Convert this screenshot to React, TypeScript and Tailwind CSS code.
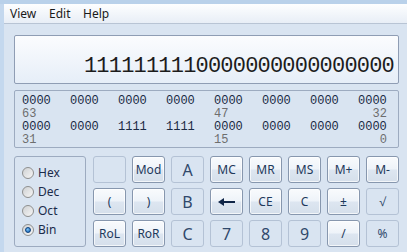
import React from 'react';

type Key = { label: string; on: boolean; big?: boolean };

const rows: Key[][] = [
  [
    { label: '', on: false },
    { label: 'Mod', on: true },
    { label: 'A', on: false, big: true },
    { label: 'MC', on: true },
    { label: 'MR', on: true },
    { label: 'MS', on: true },
    { label: 'M+', on: true },
    { label: 'M-', on: true },
  ],
  [
    { label: '(', on: true },
    { label: ')', on: true },
    { label: 'B', on: false, big: true },
    { label: 'back', on: true },
    { label: 'CE', on: true },
    { label: 'C', on: true },
    { label: '±', on: true },
    { label: '√', on: false },
  ],
  [
    { label: 'RoL', on: true },
    { label: 'RoR', on: true },
    { label: 'C', on: false, big: true },
    { label: '7', on: false, big: true },
    { label: '8', on: false, big: true },
    { label: '9', on: false, big: true },
    { label: '/', on: true },
    { label: '%', on: false },
  ],
];

const BackArrow = () => (
  <svg width="18" height="8" viewBox="0 0 18 8">
    <path d="M0 4 L6 0 L6 8 Z" fill="#0f2547" />
    <rect x="5" y="3" width="12" height="2" fill="#0f2547" />
  </svg>
);

const CalcKey = ({ k }: { k: Key }) => (
  <div
    className={
      'w-[33px] h-[27px] rounded-[3px] border flex items-center justify-center ' +
      (k.on
        ? 'border-[#8797ae] bg-[linear-gradient(to_bottom,#f9fbfd_0%,#eef3f9_48%,#dde6f1_52%,#d5dfeb_100%)] shadow-[inset_0_0_0_1px_rgba(255,255,255,0.7)] text-[#1e395b]'
        : 'border-[#b4c2d5] bg-[#d9e4f1] text-[#30486b]') +
      (k.big ? ' text-[16px]' : ' text-[12px]')
    }
  >
    {k.label === 'back' ? <BackArrow /> : k.label}
  </div>
);

const Radio = ({ label, checked }: { label: string; checked?: boolean }) => (
  <div className="h-[19px] flex items-center gap-[4px]">
    <div className="w-[12px] h-[12px] rounded-full border border-[#8e8f8f] bg-[linear-gradient(135deg,#cfd1d3,#f6f6f6)] flex items-center justify-center">
      {checked && (
        <div className="w-[6px] h-[6px] rounded-full bg-[radial-gradient(circle_at_40%_35%,#7ec4f5,#0b5bb0)] border border-[#0a3f7d]" />
      )}
    </div>
    <span className="text-[12px] text-[#1b2b4a]">{label}</span>
  </div>
);

const groups1 = ['0000', '0000', '0000', '0000', '0000', '0000', '0000', '0000'];
const groups2 = ['0000', '0000', '1111', '1111', '0000', '0000', '0000', '0000'];

const BitRow = ({ g }: { g: string[] }) => (
  <div className="flex gap-[19px] text-[#1a2a44]">
    {g.map((s, i) => (
      <span key={i} className="w-[29px]">{s}</span>
    ))}
  </div>
);

const LabelRow = ({ a, b, c }: { a: string; b: string; c: string }) => (
  <div className="flex text-[#6e6e6e]">
    <span className="w-[192px]">{a}</span>
    <span className="w-[144px]">{b}</span>
    <span className="w-[29px] text-right">{c}</span>
  </div>
);

export default function App() {
  return (
    <div
      className="w-[407px] h-[252px] overflow-hidden bg-[#d9e4f1] flex flex-col"
      style={{ fontFamily: '"Noto Sans", "Open Sans", sans-serif' }}
    >
      <div className="h-[4px] bg-[#b9d1ea] shrink-0" />
      <div className="flex flex-1">
        <div className="w-[4px] bg-[#c4d8ee] shrink-0" />
        <div className="flex-1 flex flex-col">
          {/* menu */}
          <div className="h-[20px] flex items-center pl-[6px] text-[12px] text-[#1a1a1a] bg-[linear-gradient(to_bottom,#fdfeff,#e8eef6)] border-b border-[#b8c4d4]">
            <span className="w-[39px]">View</span>
            <span className="w-[34px]">Edit</span>
            <span>Help</span>
          </div>

          <div className="pl-[10px] pr-[9px] pt-[11px] flex flex-col">
            {/* display */}
            <div
              className="h-[49px] rounded-[2px] border border-[#8f9db4] bg-[linear-gradient(to_bottom,#fbfcfe,#e6eef8)] flex items-end justify-end pr-[4px] pb-[5px] text-[22px] leading-none tracking-[-0.8px] text-[#1c1c1c]"
              style={{ fontFamily: '"Liberation Mono", monospace' }}
            >
              1111111110000000000000000
            </div>

            {/* binary panel */}
            <div
              className="mt-[6px] h-[58px] rounded-[2px] border border-[#9dabc0] pt-[4px] pl-[7px] text-[12px] leading-[13px]"
              style={{ fontFamily: '"Liberation Mono", monospace' }}
            >
              <BitRow g={groups1} />
              <LabelRow a="63" b="47" c="32" />
              <BitRow g={groups2} />
              <LabelRow a="31" b="15" c="0" />
            </div>

            {/* lower area */}
            <div className="mt-[8px] flex gap-[7px]">
              <div className="w-[72px] h-[91px] rounded-[3px] border border-[#9dabc0] pt-[6px] pl-[7px]">
                <Radio label="Hex" />
                <Radio label="Dec" />
                <Radio label="Oct" />
                <Radio label="Bin" checked />
              </div>
              <div className="flex flex-col gap-[5px]">
                {rows.map((r, i) => (
                  <div key={i} className="flex gap-[6px]">
                    {r.map((k, j) => (
                      <CalcKey key={j} k={k} />
                    ))}
                  </div>
                ))}
              </div>
            </div>
          </div>
        </div>
      </div>
    </div>
  );
}
